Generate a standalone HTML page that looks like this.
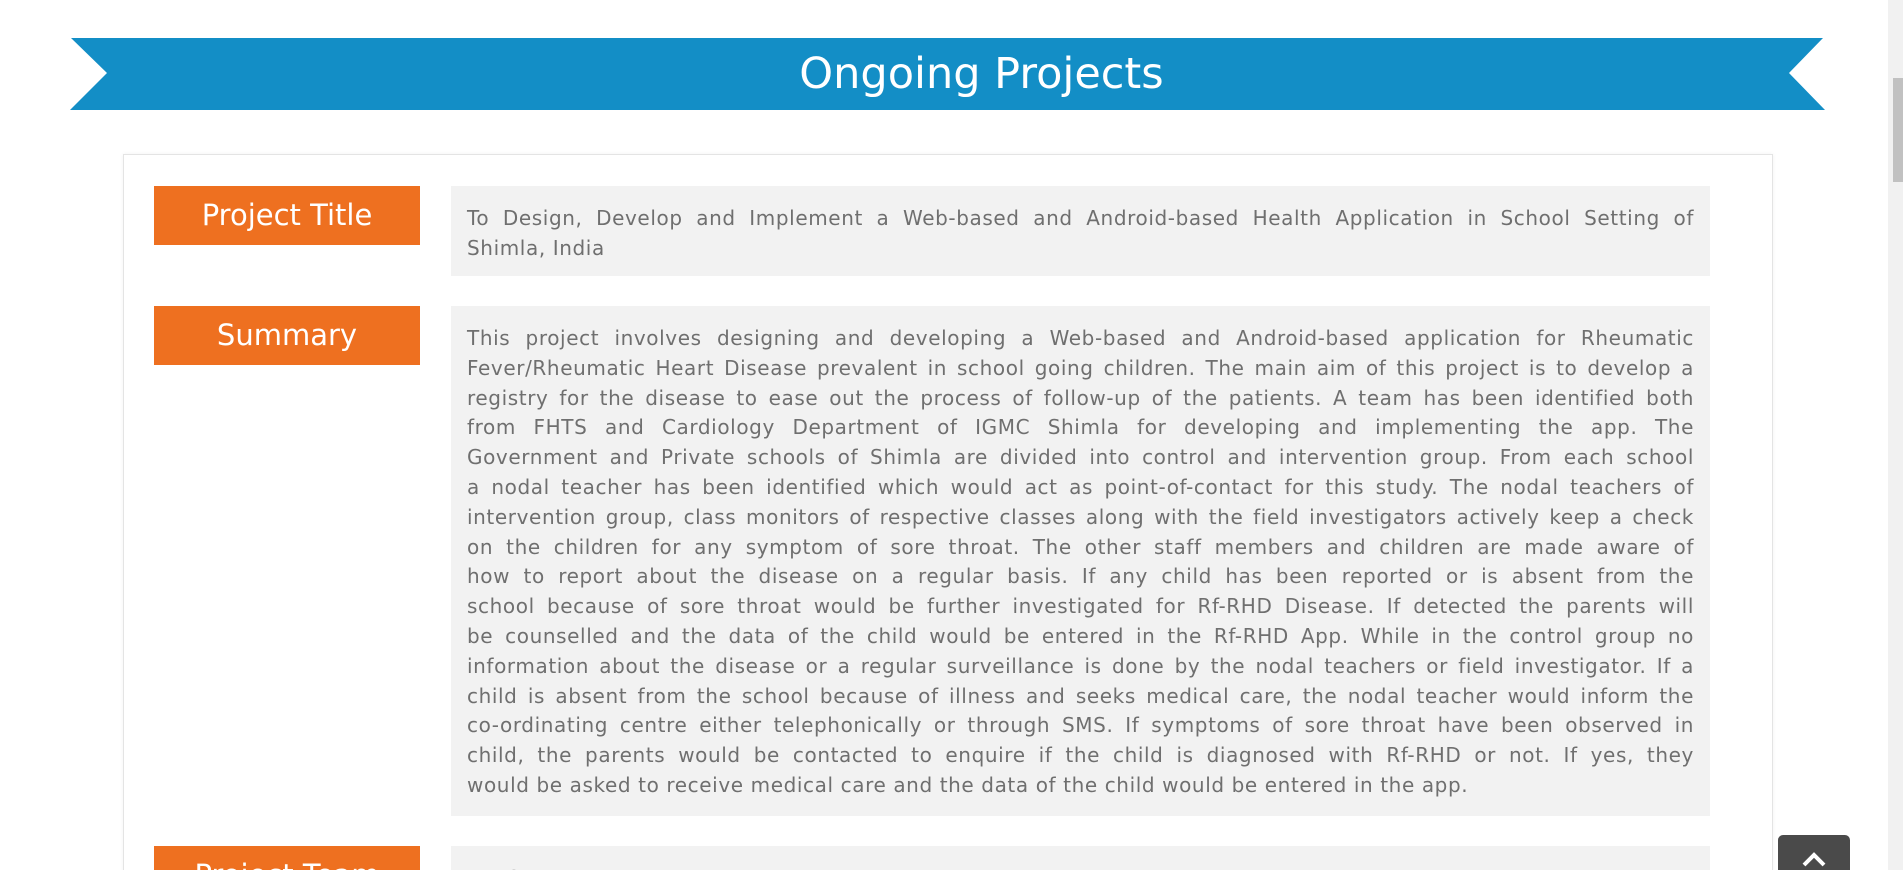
<!DOCTYPE html>
<html style="overflow:hidden;height:870px"><head><meta charset="utf-8"><style>
html,body{margin:0;width:1903px;height:870px;overflow:hidden;background:#fff;font-family:"DejaVu Sans","Liberation Sans",sans-serif}
body{position:relative}
.sb{position:absolute;left:1888px;top:0;width:15px;height:870px;background:#f1f1f1}
.sb div{position:absolute;left:5px;top:78px;width:10px;height:104px;background:#c1c1c1}
.banner{position:absolute;left:0;top:0}
.title{position:absolute;top:38px;left:0;width:1903px;text-align:center;color:#fff;font-size:43px;line-height:72px;padding-left:60px;box-sizing:border-box}
.card{position:absolute;left:123px;top:154px;width:1648px;height:740px;border:1px solid #e4e4e4;box-shadow:0 0 4px rgba(0,0,0,.05)}
.lab{position:absolute;left:154px;width:266px;height:59px;background:#ee7020;color:#fff;font-size:29px;line-height:59px;text-align:center;overflow:hidden}
.box{position:absolute;left:451px;width:1227px;background:#f2f2f2;color:#6f6f6f;font-size:20px;letter-spacing:0.6px;line-height:29.8px;padding:18px 16px 12px;overflow:hidden}
.box div{text-align:justify;text-align-last:justify;white-space:nowrap}
.box div.l{text-align-last:left}
.top{position:absolute;left:1778px;top:835px;width:72px;height:40px;background:#4a4a4a;border-radius:5px}
</style></head><body>
<svg class="banner" width="1903" height="120"><polygon points="71,38 1823,38 1789,73 1825,110 70,110 107,73" fill="#138ec6"/></svg>
<div class="title">Ongoing Projects</div>
<div class="card"></div>
<div class="lab" style="top:186px">Project Title</div>
<div class="box" style="top:186px;height:60px">
<div>To Design, Develop and Implement a Web-based and Android-based Health Application in School Setting of</div>
<div class="l">Shimla, India</div></div>
<div class="lab" style="top:306px">Summary</div>
<div class="box" style="top:306px;height:480px">
<div>This project involves designing and developing a Web-based and Android-based application for Rheumatic</div>
<div>Fever/Rheumatic Heart Disease prevalent in school going children. The main aim of this project is to develop a</div>
<div>registry for the disease to ease out the process of follow-up of the patients. A team has been identified both</div>
<div>from FHTS and Cardiology Department of IGMC Shimla for developing and implementing the app. The</div>
<div>Government and Private schools of Shimla are divided into control and intervention group. From each school</div>
<div>a nodal teacher has been identified which would act as point-of-contact for this study. The nodal teachers of</div>
<div>intervention group, class monitors of respective classes along with the field investigators actively keep a check</div>
<div>on the children for any symptom of sore throat. The other staff members and children are made aware of</div>
<div>how to report about the disease on a regular basis. If any child has been reported or is absent from the</div>
<div>school because of sore throat would be further investigated for Rf-RHD Disease. If detected the parents will</div>
<div>be counselled and the data of the child would be entered in the Rf-RHD App. While in the control group no</div>
<div>information about the disease or a regular surveillance is done by the nodal teachers or field investigator. If a</div>
<div>child is absent from the school because of illness and seeks medical care, the nodal teacher would inform the</div>
<div>co-ordinating centre either telephonically or through SMS. If symptoms of sore throat have been observed in</div>
<div>child, the parents would be contacted to enquire if the child is diagnosed with Rf-RHD or not. If yes, they</div>
<div class="l">would be asked to receive medical care and the data of the child would be entered in the app.</div></div>
<div class="lab" style="top:846px">Project Team</div>
<div class="box" style="top:846px;height:24px;padding-bottom:0"><div class="l">FHTS Team</div></div>
<div class="top"><svg width="72" height="40"><polyline points="26,30 36,20 46,30" fill="none" stroke="#fff" stroke-width="4"/></svg></div>
<div class="sb"><div></div></div>
</body></html>
